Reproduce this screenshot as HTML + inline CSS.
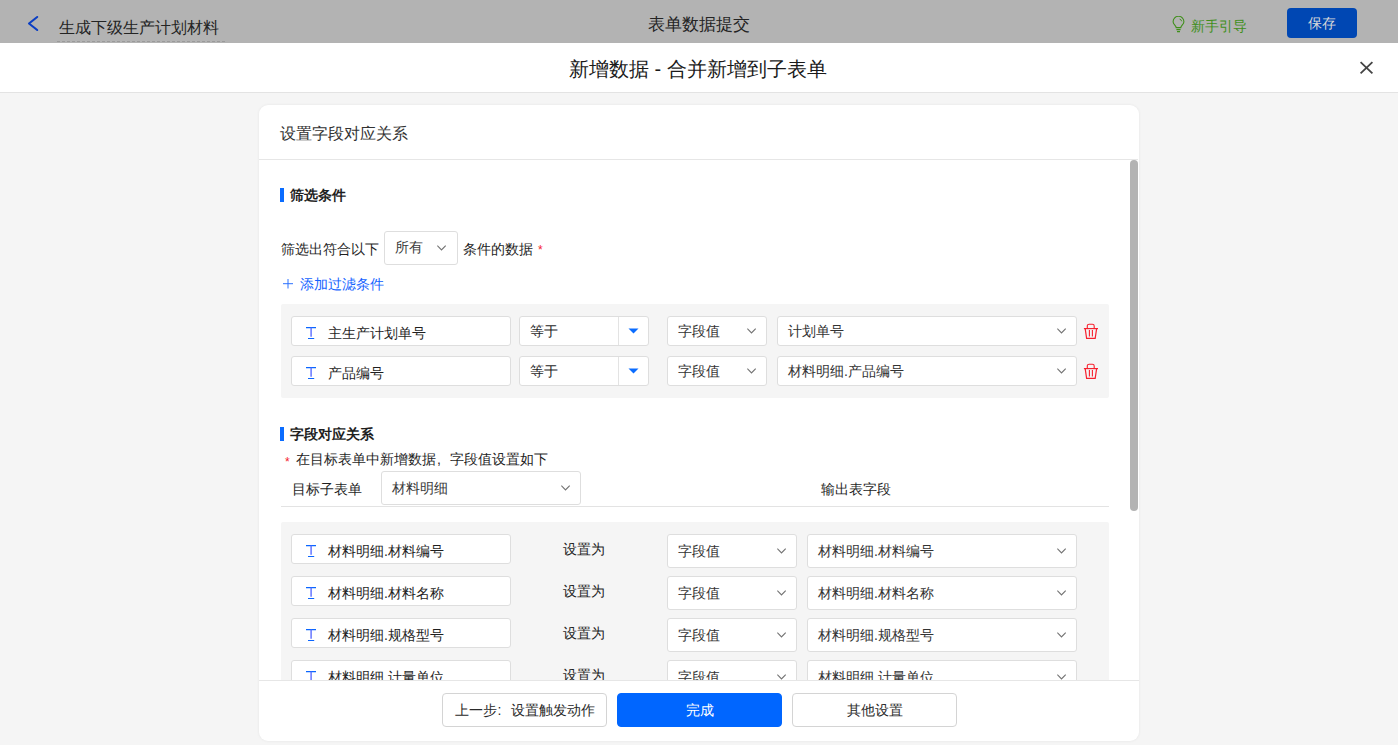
<!DOCTYPE html><html><head><meta charset="utf-8"><style>
*{box-sizing:border-box;margin:0;padding:0}
html,body{width:1398px;height:745px;overflow:hidden;background:#f5f5f5;font-family:"Liberation Sans",sans-serif;color:#1f1f1f}
.a{position:absolute}
.t{position:absolute;font-size:14px;line-height:20px;white-space:nowrap;color:#1f1f1f}
.bx{position:absolute;background:#fff;border:1px solid #dedede;border-radius:3px}
.gray{position:absolute;background:#f5f5f5;border-radius:2px}
.btn{position:absolute;border:1px solid #d4d4d4;border-radius:4px;background:#fff;font-size:14px;text-align:center;line-height:32px;color:#2a2a2a}
</style></head><body>
<div class="a" style="left:0;top:0;width:1398px;height:43px;background:#b3b3b3"></div>
<svg class="a" style="left:26px;top:14px" width="14" height="19" viewBox="0 0 14 19"><path d="M11.2 3 L3 9.5 L11.2 16" fill="none" stroke="#0a3ec4" stroke-width="2.1" stroke-linecap="round" stroke-linejoin="round"/></svg>
<div class="a" style="left:59px;top:18px;font-size:16px;line-height:20px;color:#242424;white-space:nowrap">生成下级生产计划材料</div>
<div class="a" style="left:57px;top:41px;width:168px;height:1px;background:repeating-linear-gradient(90deg,#9a9a9a 0 3px,transparent 3px 5px)"></div>
<div class="a" style="left:648px;top:15px;font-size:17px;line-height:20px;color:#242424;white-space:nowrap">表单数据提交</div>
<svg class="a" style="left:1172px;top:16px" width="13" height="17" viewBox="0 0 13 17"><path d="M4.2 11.6 C4 9.6 1.1 8.4 1.1 5.7 A5.4 5.4 0 0 1 11.9 5.7 C11.9 8.4 9 9.6 8.8 11.6 Z" fill="none" stroke="#3f8f1a" stroke-width="1.1"/><path d="M4.4 13.6 H8.6 M5 15.6 H8" stroke="#3f8f1a" stroke-width="1.1"/><path d="M7.6 3.1 A2.7 2.7 0 0 1 9.7 5.3" fill="none" stroke="#3f8f1a" stroke-width="0.9"/></svg>
<div class="t" style="left:1191px;top:16px;color:#3f8f1a">新手引导</div>
<div class="a" style="left:1287px;top:8px;width:70px;height:30px;background:#0047b3;border-radius:4px;color:#d9d9d9;font-size:14px;line-height:30px;text-align:center">保存</div>
<div class="a" style="left:0;top:43px;width:1398px;height:50px;background:#fff;border-bottom:1px solid #e3e3e3"></div>
<div class="a" style="left:569px;top:59px;font-size:20px;line-height:20px;color:#1a1a1a;white-space:nowrap">新增数据 - 合并新增到子表单</div>
<svg class="a" style="left:1358px;top:60px" width="16" height="16" viewBox="0 0 16 16"><path d="M2.6 2.2 L14.4 13.4 M14.4 2.2 L2.6 13.4" stroke="#444" stroke-width="1.8"/></svg>
<div class="a" style="left:259px;top:105px;width:880px;height:636px;background:#fff;border-radius:9px;box-shadow:0 0 3px rgba(0,0,0,0.07)"></div>
<div class="a" style="left:280px;top:124px;font-size:16px;line-height:20px;color:#333;white-space:nowrap">设置字段对应关系</div>
<div class="a" style="left:259px;top:159px;width:879px;height:1px;background:#e6e6e6"></div>
<div class="a" style="left:0;top:0;width:1398px;height:745px;clip-path:polygon(259px 160px,1139px 160px,1139px 680px,259px 680px)">
<div class="a" style="left:280px;top:188px;width:4px;height:14px;background:#0a6cff"></div>
<div class="t" style="left:290px;top:185px;font-weight:bold">筛选条件</div>
<div class="t" style="left:281px;top:239px">筛选出符合以下</div>
<div class="bx" style="left:384px;top:231px;width:74px;height:34px"></div>
<div class="t" style="left:395px;top:237px;color:#3a3a3a">所有</div>
<svg class="a" style="left:437px;top:245px" width="11" height="7" viewBox="0 0 11 7"><path d="M0.3 0.6 L4.5 5 L8.7 0.6" fill="none" stroke="#737373" stroke-width="1.15"/></svg>
<div class="t" style="left:463px;top:239px">条件的数据</div>
<div class="t" style="left:538px;top:240px;color:#f5222d;font-size:12px">*</div>
<svg class="a" style="left:282px;top:278px" width="12" height="12" viewBox="0 0 12 12"><path d="M1 5.7 H11 M6 1 V10.5" stroke="#2d72ff" stroke-width="1"/></svg>
<div class="t" style="left:300px;top:274px;color:#1463ff">添加过滤条件</div>
<div class="gray" style="left:281px;top:304px;width:828px;height:94px"></div>
<div class="bx" style="left:291px;top:316px;width:220px;height:30px"></div>
<svg class="a" style="left:305px;top:326px" width="12" height="14" viewBox="0 0 12 14"><path d="M1 1.6 H11 M3 12.5 H9.2" stroke="#0a66ff" stroke-width="1.2"/><path d="M6.1 1.6 V10.7" stroke="#5a6cff" stroke-width="1.4"/></svg>
<div class="t" style="left:328px;top:323px">主生产计划单号</div>
<div class="bx" style="left:519px;top:316px;width:130px;height:30px"></div>
<div class="a" style="left:618px;top:317px;width:1px;height:28px;background:#e3e3e3"></div>
<div class="t" style="left:530px;top:321px">等于</div>
<svg class="a" style="left:628px;top:328px" width="11" height="6" viewBox="0 0 11 6"><path d="M0.5 0.5 H10.5 L5.5 5.5 Z" fill="#0a6cff"/></svg>
<div class="bx" style="left:667px;top:316px;width:100px;height:30px"></div>
<div class="t" style="left:678px;top:321px;color:#333">字段值</div>
<svg class="a" style="left:747px;top:328px" width="11" height="7" viewBox="0 0 11 7"><path d="M0.3 0.6 L4.5 5 L8.7 0.6" fill="none" stroke="#737373" stroke-width="1.15"/></svg>
<div class="bx" style="left:777px;top:316px;width:300px;height:30px"></div>
<div class="t" style="left:788px;top:321px;color:#333">计划单号</div>
<svg class="a" style="left:1057px;top:328px" width="11" height="7" viewBox="0 0 11 7"><path d="M0.3 0.6 L4.5 5 L8.7 0.6" fill="none" stroke="#737373" stroke-width="1.15"/></svg>
<svg class="a" style="left:1083px;top:323px" width="16" height="17" viewBox="0 0 16 17"><path d="M0.9 5.6 H15" stroke="#f7202e" stroke-width="1.2"/><path d="M4.3 5.6 V3 A1.8 1.8 0 0 1 6.1 1.2 H9.4 A1.8 1.8 0 0 1 11.2 3 V5.6" fill="none" stroke="#f7202e" stroke-width="1.1"/><path d="M2.2 5.6 L3.6 15.4 H12.2 L13.6 5.6" fill="none" stroke="#f7202e" stroke-width="1.2"/><path d="M6.4 7 V13.6 M9.4 7 V13.6" stroke="#f7202e" stroke-width="1.1"/></svg>
<div class="bx" style="left:291px;top:356px;width:220px;height:30px"></div>
<svg class="a" style="left:305px;top:366px" width="12" height="14" viewBox="0 0 12 14"><path d="M1 1.6 H11 M3 12.5 H9.2" stroke="#0a66ff" stroke-width="1.2"/><path d="M6.1 1.6 V10.7" stroke="#5a6cff" stroke-width="1.4"/></svg>
<div class="t" style="left:328px;top:363px">产品编号</div>
<div class="bx" style="left:519px;top:356px;width:130px;height:30px"></div>
<div class="a" style="left:618px;top:357px;width:1px;height:28px;background:#e3e3e3"></div>
<div class="t" style="left:530px;top:361px">等于</div>
<svg class="a" style="left:628px;top:368px" width="11" height="6" viewBox="0 0 11 6"><path d="M0.5 0.5 H10.5 L5.5 5.5 Z" fill="#0a6cff"/></svg>
<div class="bx" style="left:667px;top:356px;width:100px;height:30px"></div>
<div class="t" style="left:678px;top:361px;color:#333">字段值</div>
<svg class="a" style="left:747px;top:368px" width="11" height="7" viewBox="0 0 11 7"><path d="M0.3 0.6 L4.5 5 L8.7 0.6" fill="none" stroke="#737373" stroke-width="1.15"/></svg>
<div class="bx" style="left:777px;top:356px;width:300px;height:30px"></div>
<div class="t" style="left:788px;top:361px;color:#333">材料明细.产品编号</div>
<svg class="a" style="left:1057px;top:368px" width="11" height="7" viewBox="0 0 11 7"><path d="M0.3 0.6 L4.5 5 L8.7 0.6" fill="none" stroke="#737373" stroke-width="1.15"/></svg>
<svg class="a" style="left:1083px;top:363px" width="16" height="17" viewBox="0 0 16 17"><path d="M0.9 5.6 H15" stroke="#f7202e" stroke-width="1.2"/><path d="M4.3 5.6 V3 A1.8 1.8 0 0 1 6.1 1.2 H9.4 A1.8 1.8 0 0 1 11.2 3 V5.6" fill="none" stroke="#f7202e" stroke-width="1.1"/><path d="M2.2 5.6 L3.6 15.4 H12.2 L13.6 5.6" fill="none" stroke="#f7202e" stroke-width="1.2"/><path d="M6.4 7 V13.6 M9.4 7 V13.6" stroke="#f7202e" stroke-width="1.1"/></svg>
<div class="a" style="left:280px;top:427px;width:4px;height:14px;background:#0a6cff"></div>
<div class="t" style="left:290px;top:424px;font-weight:bold">字段对应关系</div>
<div class="t" style="left:285px;top:452px;color:#f5222d;font-size:12px">*</div>
<div class="t" style="left:296px;top:449px">在目标表单中新增数据<span style="display:inline-block;width:14px;text-align:left;padding-left:1px">,</span>字段值设置如下</div>
<div class="t" style="left:292px;top:479px">目标子表单</div>
<div class="bx" style="left:381px;top:471px;width:200px;height:34px"></div>
<div class="t" style="left:392px;top:478px;color:#3a3a3a">材料明细</div>
<svg class="a" style="left:561px;top:485px" width="11" height="7" viewBox="0 0 11 7"><path d="M0.3 0.6 L4.5 5 L8.7 0.6" fill="none" stroke="#737373" stroke-width="1.15"/></svg>
<div class="t" style="left:821px;top:479px">输出表字段</div>
<div class="a" style="left:281px;top:506px;width:828px;height:1px;background:#e3e3e3"></div>
<div class="gray" style="left:281px;top:522px;width:828px;height:200px"></div>
<div class="bx" style="left:291px;top:534px;width:220px;height:30px"></div>
<svg class="a" style="left:305px;top:544px" width="12" height="14" viewBox="0 0 12 14"><path d="M1 1.6 H11 M3 12.5 H9.2" stroke="#0a66ff" stroke-width="1.2"/><path d="M6.1 1.6 V10.7" stroke="#5a6cff" stroke-width="1.4"/></svg>
<div class="t" style="left:328px;top:541px">材料明细.材料编号</div>
<div class="t" style="left:563px;top:539px">设置为</div>
<div class="bx" style="left:667px;top:534px;width:130px;height:34px"></div>
<div class="t" style="left:678px;top:541px;color:#333">字段值</div>
<svg class="a" style="left:777px;top:548px" width="11" height="7" viewBox="0 0 11 7"><path d="M0.3 0.6 L4.5 5 L8.7 0.6" fill="none" stroke="#737373" stroke-width="1.15"/></svg>
<div class="bx" style="left:807px;top:534px;width:270px;height:34px"></div>
<div class="t" style="left:818px;top:541px;color:#333">材料明细.材料编号</div>
<svg class="a" style="left:1057px;top:548px" width="11" height="7" viewBox="0 0 11 7"><path d="M0.3 0.6 L4.5 5 L8.7 0.6" fill="none" stroke="#737373" stroke-width="1.15"/></svg>
<div class="bx" style="left:291px;top:576px;width:220px;height:30px"></div>
<svg class="a" style="left:305px;top:586px" width="12" height="14" viewBox="0 0 12 14"><path d="M1 1.6 H11 M3 12.5 H9.2" stroke="#0a66ff" stroke-width="1.2"/><path d="M6.1 1.6 V10.7" stroke="#5a6cff" stroke-width="1.4"/></svg>
<div class="t" style="left:328px;top:583px">材料明细.材料名称</div>
<div class="t" style="left:563px;top:581px">设置为</div>
<div class="bx" style="left:667px;top:576px;width:130px;height:34px"></div>
<div class="t" style="left:678px;top:583px;color:#333">字段值</div>
<svg class="a" style="left:777px;top:590px" width="11" height="7" viewBox="0 0 11 7"><path d="M0.3 0.6 L4.5 5 L8.7 0.6" fill="none" stroke="#737373" stroke-width="1.15"/></svg>
<div class="bx" style="left:807px;top:576px;width:270px;height:34px"></div>
<div class="t" style="left:818px;top:583px;color:#333">材料明细.材料名称</div>
<svg class="a" style="left:1057px;top:590px" width="11" height="7" viewBox="0 0 11 7"><path d="M0.3 0.6 L4.5 5 L8.7 0.6" fill="none" stroke="#737373" stroke-width="1.15"/></svg>
<div class="bx" style="left:291px;top:618px;width:220px;height:30px"></div>
<svg class="a" style="left:305px;top:628px" width="12" height="14" viewBox="0 0 12 14"><path d="M1 1.6 H11 M3 12.5 H9.2" stroke="#0a66ff" stroke-width="1.2"/><path d="M6.1 1.6 V10.7" stroke="#5a6cff" stroke-width="1.4"/></svg>
<div class="t" style="left:328px;top:625px">材料明细.规格型号</div>
<div class="t" style="left:563px;top:623px">设置为</div>
<div class="bx" style="left:667px;top:618px;width:130px;height:34px"></div>
<div class="t" style="left:678px;top:625px;color:#333">字段值</div>
<svg class="a" style="left:777px;top:632px" width="11" height="7" viewBox="0 0 11 7"><path d="M0.3 0.6 L4.5 5 L8.7 0.6" fill="none" stroke="#737373" stroke-width="1.15"/></svg>
<div class="bx" style="left:807px;top:618px;width:270px;height:34px"></div>
<div class="t" style="left:818px;top:625px;color:#333">材料明细.规格型号</div>
<svg class="a" style="left:1057px;top:632px" width="11" height="7" viewBox="0 0 11 7"><path d="M0.3 0.6 L4.5 5 L8.7 0.6" fill="none" stroke="#737373" stroke-width="1.15"/></svg>
<div class="bx" style="left:291px;top:660px;width:220px;height:30px"></div>
<svg class="a" style="left:305px;top:670px" width="12" height="14" viewBox="0 0 12 14"><path d="M1 1.6 H11 M3 12.5 H9.2" stroke="#0a66ff" stroke-width="1.2"/><path d="M6.1 1.6 V10.7" stroke="#5a6cff" stroke-width="1.4"/></svg>
<div class="t" style="left:328px;top:667px">材料明细.计量单位</div>
<div class="t" style="left:563px;top:665px">设置为</div>
<div class="bx" style="left:667px;top:660px;width:130px;height:34px"></div>
<div class="t" style="left:678px;top:667px;color:#333">字段值</div>
<svg class="a" style="left:777px;top:674px" width="11" height="7" viewBox="0 0 11 7"><path d="M0.3 0.6 L4.5 5 L8.7 0.6" fill="none" stroke="#737373" stroke-width="1.15"/></svg>
<div class="bx" style="left:807px;top:660px;width:270px;height:34px"></div>
<div class="t" style="left:818px;top:667px;color:#333">材料明细.计量单位</div>
<svg class="a" style="left:1057px;top:674px" width="11" height="7" viewBox="0 0 11 7"><path d="M0.3 0.6 L4.5 5 L8.7 0.6" fill="none" stroke="#737373" stroke-width="1.15"/></svg>
<div class="a" style="left:1130px;top:160px;width:8px;height:351px;background:#b3b3b3;border-radius:4px"></div>
</div>
<div class="a" style="left:259px;top:680px;width:880px;height:1px;background:#e6e6e6"></div>
<div class="btn" style="left:442px;top:693px;width:165px;height:34px">上一步<span style="display:inline-block;width:14px;text-align:left;padding-left:1px">:</span>设置触发动作</div>
<div class="btn" style="left:617px;top:693px;width:165px;height:34px;background:#0066ff;border-color:#0066ff;color:#fff">完成</div>
<div class="btn" style="left:792px;top:693px;width:165px;height:34px">其他设置</div>
</body></html>
